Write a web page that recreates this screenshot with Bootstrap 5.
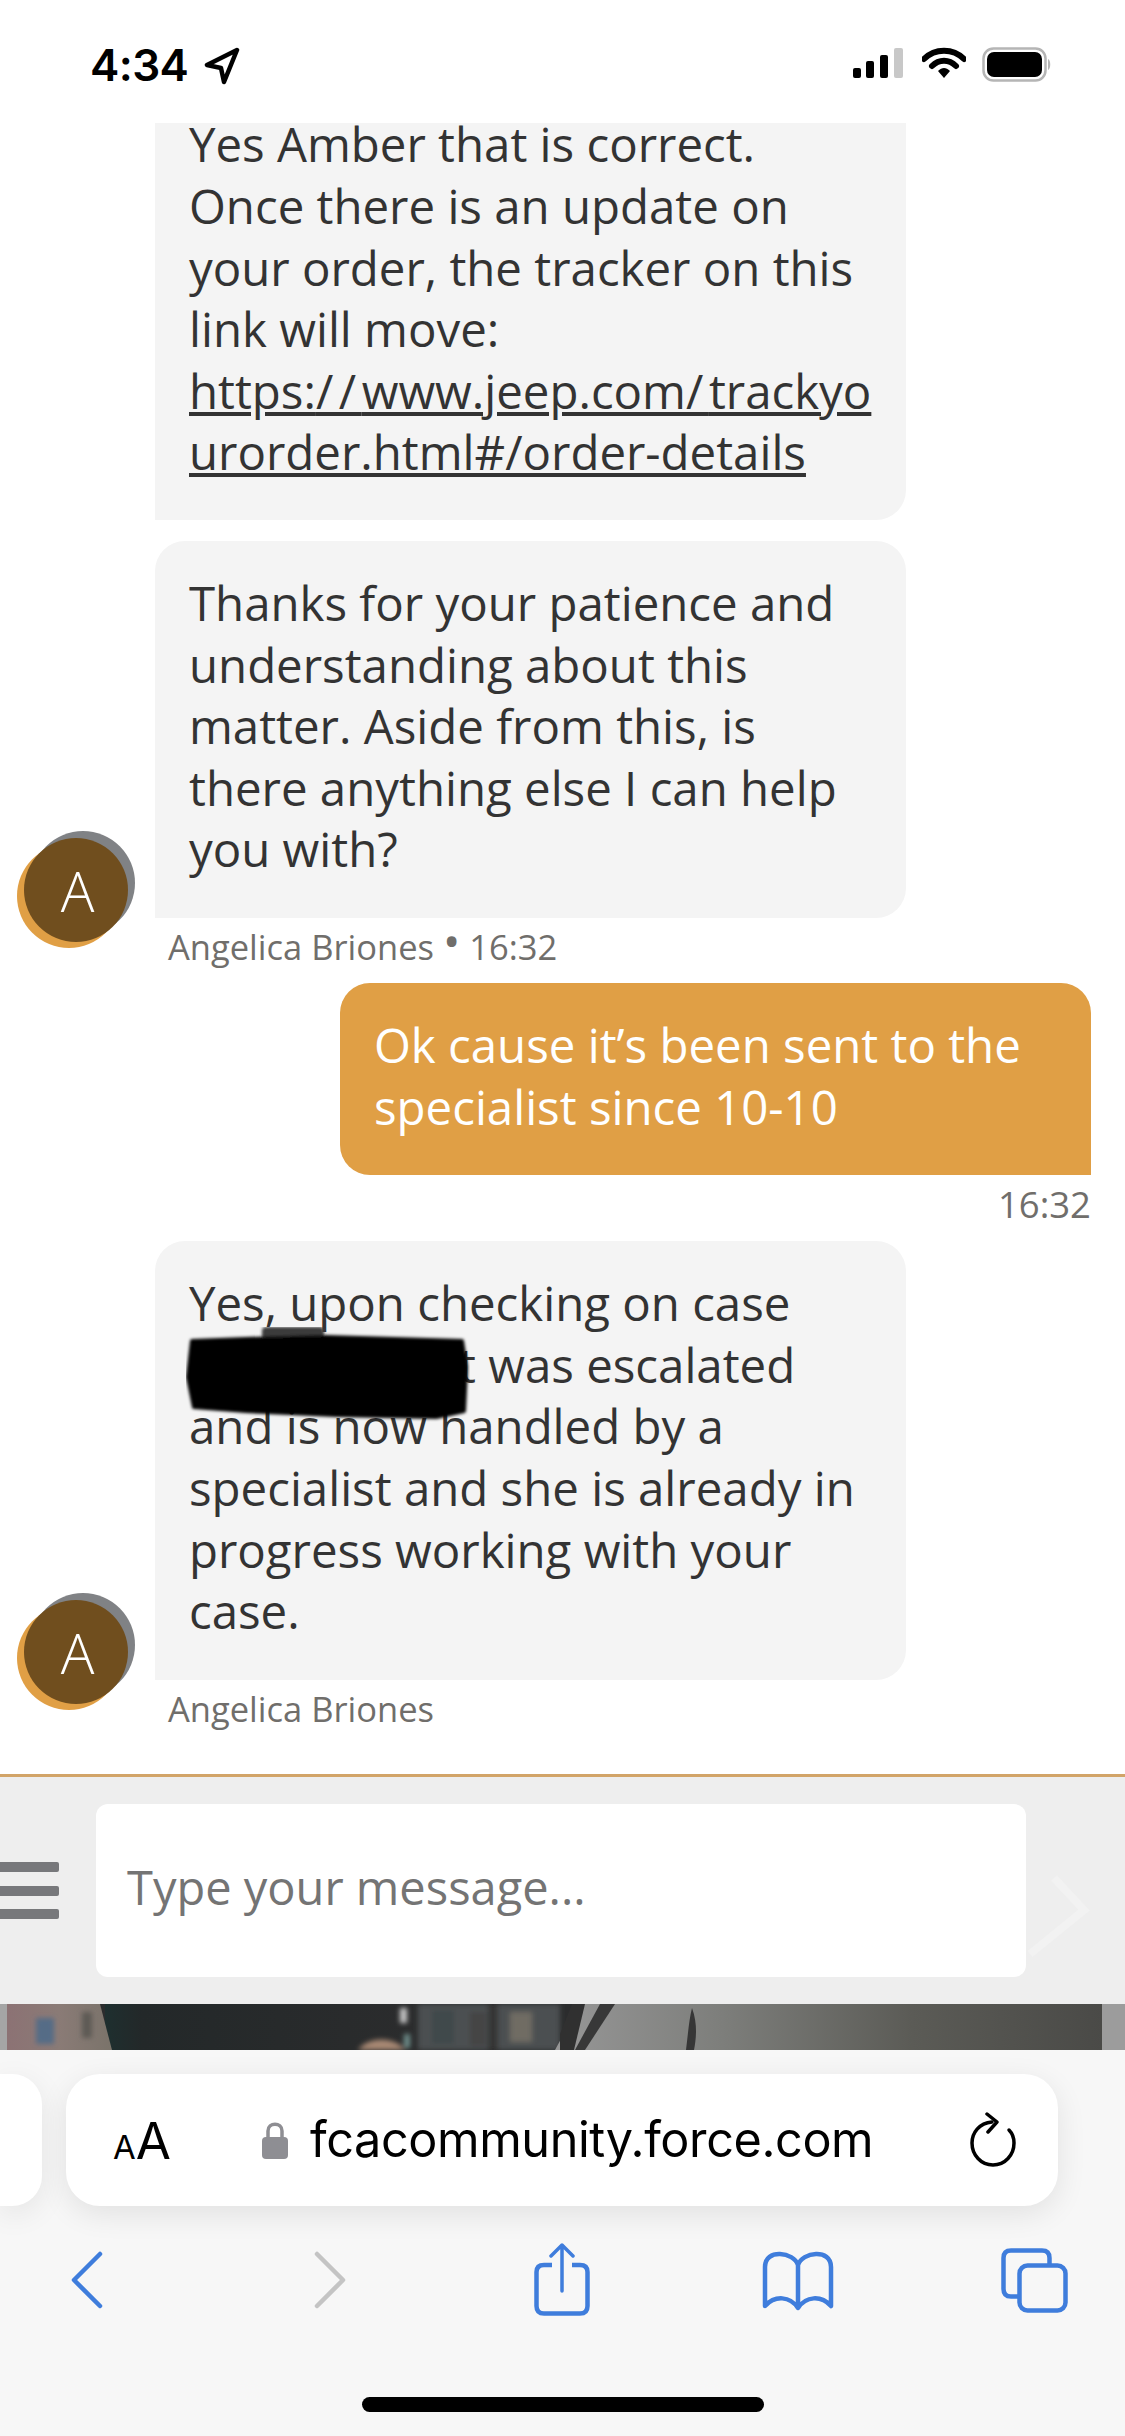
<!DOCTYPE html>
<html lang="en">
<head>
<meta charset="utf-8">
<title>Chat</title>
<link href="https://cdn.jsdelivr.net/npm/bootstrap@5.3.0/dist/css/bootstrap.min.css" rel="stylesheet">
<style>
html,body{margin:0;background:#fff}
.screen{width:1125px;height:2436px;font-family:"Open Sans",sans-serif}
.status-strip{height:123px;flex:none;padding:47px 73px 0 90px;background:#fff}
.clock{font-family:Inter,sans-serif;font-weight:600;font-size:44px;line-height:36px;letter-spacing:-.6px;color:#000}
.wifi-mark{margin-left:19px;margin-right:16px}
.chat-pane{flex:1 1 0;min-height:0;padding-right:34px}
.avatar-col{width:155px;flex:none;padding-left:24px}
.avatar-dot{width:104px;height:104px;border-radius:50%;background:#704e1e;color:#fff;font-size:56px;font-weight:300;padding-left:3px;margin-bottom:41px;box-shadow:-7px 6px 0 #e09f45,7px -7px 0 #808285}
.msg-block{width:751px}
.bubble-agent{background:#f4f4f4;color:#333;font-size:47.4px;line-height:61.6px;padding:31px 34px 38px;border-radius:30px 30px 30px 0;width:751px}
.bubble-agent a{color:#333}
.wide-slash{letter-spacing:5.5px}
.bubble-own{background:#e09f45;color:#fff;font-size:47.4px;line-height:61.6px;padding:31px 34px 38px;border-radius:30px 30px 0 30px;width:751px}
.first-bubble{border-radius:0 0 30px 0;padding-top:0;padding-bottom:37px;margin-bottom:21px}
.first-line{display:block;line-height:42px;margin-bottom:10px}
.meta-line{font-size:34.5px;line-height:40px;color:#706e6b;margin-top:9px;padding-left:13px;margin-bottom:16px}
.meta-right{font-size:36.5px;line-height:40px;color:#706e6b;margin-top:9px;margin-bottom:17px}
.dot-sep{font-size:46px;line-height:0;vertical-align:2px}
.redact-gap{display:inline-block;width:270px}
.redact-mark{position:absolute;left:31px;top:86px}
.compose-rule{height:3px;background:#d2a468;flex:none}
.compose-bar{height:227px;background:#eee;flex:none;padding:27px 99px 27px 0}
.bg-chevron{position:absolute;right:0;top:95px}
.menu-bars{width:59px;height:57px;margin-right:37px;flex:none}
.menu-bars i{display:block;height:10px;background:#77787b;border-radius:0 2px 2px 0}
.compose-box{height:173px;background:#fff;border-radius:12px;font-size:47px;color:#747474;padding:0 0 6px 31px;flex:1 1 0;position:relative}
.photo-strip{height:46px;flex:none;line-height:0}
.safari-panel{height:386px;background:#f7f7f7;flex:none;padding-top:24px}
.tab-stub{width:42px;height:132px;background:#fff;border-radius:0 30px 30px 0;margin-right:24px;box-shadow:0 8px 30px rgba(0,0,0,.08)}
.url-pill{width:992px;height:132px;background:#fff;border-radius:34px;box-shadow:0 8px 30px rgba(0,0,0,.09);padding:0 41px 0 47px}
.aa-label{font-family:Inter,sans-serif;color:#000;line-height:1;width:100px;flex:none}
.aa-small{font-size:33px}
.aa-big{font-size:51px}
.url-text{font-family:Inter,sans-serif;font-size:48.6px;color:#000;letter-spacing:-.4px;margin-left:21px;line-height:1}
.tool-row{height:80px;margin-top:34px}
.tool-row svg{flex:none;display:block}
.t-back{margin-left:70px}
.t-fwd{margin-left:209px}
.t-share{margin-left:185px}
.t-book{margin-left:169px}
.t-tabs{margin-left:164px}
.home-pill{width:402px;height:15px;background:#000;border-radius:8px;margin:77px auto 0}
</style>
</head>
<body>
<div class="screen d-flex flex-column overflow-hidden">
  <div class="status-strip d-flex justify-content-between align-items-start">
    <div class="d-flex align-items-start">
      <span class="clock">4:34</span>
      <svg width="36" height="38" viewBox="0 0 36 38" class="ms-3"><path d="M33 3 L3 18 L17 21 L20 35 Z" fill="none" stroke="#000" stroke-width="4.5" stroke-linejoin="round"/></svg>
    </div>
    <div class="d-flex align-items-start">
      <svg width="50" height="32" viewBox="0 0 50 32"><rect x="0" y="21" width="8" height="10" rx="2" fill="#000"/><rect x="13" y="14" width="8" height="17" rx="2" fill="#000"/><rect x="27" y="8" width="8" height="23" rx="2" fill="#000"/><rect x="41" y="1" width="9" height="30" rx="2" fill="#c8c8c8"/></svg>
      <svg width="44" height="32" viewBox="0 0 44 32" class="wifi-mark"><path d="M2 12 C13 1 31 1 42 12" fill="none" stroke="#000" stroke-width="6" stroke-linecap="round"/><path d="M10 19 C17 12 27 12 34 19" fill="none" stroke="#000" stroke-width="6" stroke-linecap="round"/><path d="M16 24 C20 20 24 20 28 24 L22 31 Z" fill="#000"/></svg>
      <svg width="70" height="35" viewBox="0 0 70 35"><rect x="1.5" y="1.5" width="62" height="32" rx="10" fill="none" stroke="#b5b5b5" stroke-width="2.5"/><rect x="5" y="5" width="55" height="25" rx="7" fill="#000"/><path d="M66 12 C69 13 69 22 66 23 Z" fill="#b5b5b5"/></svg>
    </div>
  </div>

  <main class="chat-pane">
    <div class="d-flex">
      <div class="avatar-col"></div>
      <div class="bubble-agent first-bubble"><span class="first-line">Yes Amber that is correct.</span>Once there is an update on your order, the tracker on this link will move:<br><a href="#" class="text-decoration-underline">https:<span class="wide-slash">//</span>www.jeep.com<span class="wide-slash">/</span>trackyo<br>urorder.html#/order-details</a></div>
    </div>
    <div class="d-flex">
      <div class="avatar-col d-flex align-items-end"><div class="avatar-dot d-flex align-items-center justify-content-center">A</div></div>
      <div class="msg-block">
        <div class="bubble-agent">Thanks for your patience and understanding about this matter. Aside from this, is there anything else I can help you with?</div>
        <div class="meta-line">Angelica Briones <span class="dot-sep">•</span> 16:32</div>
      </div>
    </div>
    <div class="d-flex justify-content-end">
      <div class="msg-block">
        <div class="bubble-own">Ok cause it’s been sent to the specialist since 10-10</div>
        <div class="meta-right text-end">16:32</div>
      </div>
    </div>
    <div class="d-flex">
      <div class="avatar-col d-flex align-items-end"><div class="avatar-dot d-flex align-items-center justify-content-center">A</div></div>
      <div class="msg-block">
        <div class="bubble-agent position-relative">Yes, upon checking on case<br><span class="redact-gap"></span>t was escalated and is now handled by a specialist and she is already in progress working with your case.
          <svg class="redact-mark" width="284" height="96" viewBox="0 0 284 96"><defs><filter id="smear" x="-5%" y="-10%" width="110%" height="120%"><feGaussianBlur stdDeviation="1.500"/></filter></defs><g filter="url(#smear)"><rect x="76" y="0" width="62" height="14" rx="4" fill="#3a3a3a"/><path d="M6 14 L60 12 L140 10 L276 14 L280 40 L278 84 L250 90 L150 88 L60 84 L8 80 L2 50 Z" fill="#000" stroke="#000" stroke-width="4" stroke-linejoin="round"/></g></svg>
        </div>
        <div class="meta-line">Angelica Briones</div>
      </div>
    </div>
  </main>

  <div class="compose-rule"></div>
  <div class="compose-bar d-flex align-items-center position-relative">
    <svg class="bg-chevron" width="99" height="90" viewBox="0 0 99 90"><path d="M4 82 L58 38 L28 6" fill="none" stroke="#f2f2f2" stroke-width="8"/></svg>
    <div class="menu-bars d-flex flex-column justify-content-between"><i></i><i></i><i></i></div>
    <div class="compose-box d-flex align-items-center">Type your message...</div>
  </div>

  <div class="photo-strip">
    <svg width="1125" height="46" viewBox="0 0 1125 46">
      <defs>
        <linearGradient id="gr" gradientUnits="userSpaceOnUse" x1="560" x2="1102" y1="0" y2="0"><stop offset="0" stop-color="#969696"/><stop offset=".3" stop-color="#7d7e7b"/><stop offset=".65" stop-color="#5b5b56"/><stop offset="1" stop-color="#4a4a47"/></linearGradient>
        <linearGradient id="mur" x1="0" x2="1" y1="0" y2="0"><stop offset="0" stop-color="#8c7274"/><stop offset=".5" stop-color="#8a7b76"/><stop offset="1" stop-color="#7a736a"/></linearGradient>
        <linearGradient id="dk" x1="0" x2="1" y1="0" y2="0"><stop offset="0" stop-color="#1e2f2f"/><stop offset=".12" stop-color="#232829"/><stop offset="1" stop-color="#2b2c2d"/></linearGradient>
        <filter id="soft"><feGaussianBlur stdDeviation="2.500"/></filter>
      </defs>
      <rect width="1125" height="46" fill="#2b2c2d"/>
      <rect x="105" width="310" height="46" fill="url(#dk)"/>
      <path d="M7 0 H100 L112 46 H7 Z" fill="url(#mur)"/>
      <g filter="url(#soft)">
        <rect x="36" y="14" width="18" height="26" fill="#556c86"/>
        <rect x="82" y="8" width="10" height="26" fill="#5d5a55"/>
        <path d="M358 46 C368 32 395 32 405 46 Z" fill="#a88873"/>
        <rect x="400" y="4" width="7" height="15" fill="#c8c8c8"/>
        <rect x="404" y="30" width="6" height="14" fill="#6f8f8c"/>
        <rect x="418" width="142" height="46" fill="#4b5051"/>
        <rect x="432" y="6" width="22" height="34" fill="#3f484c"/>
        <rect x="470" y="8" width="16" height="34" fill="#444"/>
        <rect x="510" y="8" width="22" height="30" fill="#6f6c64"/>
        <rect x="488" width="10" height="46" fill="#353636"/>
      </g>
      <path d="M555 46 L580 0 H1102 V46 Z" fill="url(#gr)"/>
      <path d="M560 46 V30 L572 0 H585 L574 46 Z" fill="#303030"/>
      <path d="M575 46 L600 0 H615 L585 46 Z" fill="#383838"/>
      <path d="M692 4 C698 20 696 36 694 46 H686 C688 30 689 16 692 4 Z" fill="#363636"/>
      <rect x="1102" width="23" height="46" fill="#9c9c9c"/>
      <rect width="7" height="46" fill="#a5a5a5"/>
    </svg>
  </div>

  <div class="safari-panel">
    <div class="d-flex">
      <div class="tab-stub"></div>
      <div class="url-pill d-flex align-items-center">
        <div class="aa-label"><span class="aa-small">A</span><span class="aa-big">A</span></div>
        <svg width="28" height="38" viewBox="0 0 28 38" class="ms-5"><path d="M7 18 V10 C7 1 21 1 21 10 V18" fill="none" stroke="#8e8e93" stroke-width="3.5"/><rect x="1" y="16" width="26" height="22" rx="4" fill="#8e8e93"/></svg>
        <span class="url-text">fcacommunity.force.com</span>
        <svg width="48" height="56" viewBox="0 0 48 56" class="ms-auto"><path d="M23 10 C10 11 3 21 3 31 C3 43 12 53 24 53 C36 53 45 43 45 31 C45 25 43 21 40 18" fill="none" stroke="#000" stroke-width="3.500" stroke-linecap="round"/><path d="M18 2 L28 10 L19 20" fill="none" stroke="#000" stroke-width="3.500" stroke-linecap="round" stroke-linejoin="round"/></svg>
      </div>
    </div>
    <div class="tool-row d-flex align-items-center">
      <svg class="t-back" width="34" height="60" viewBox="0 0 34 60"><path d="M30 4 L4 30 L30 56" fill="none" stroke="#3f7ddc" stroke-width="4.5" stroke-linecap="round" stroke-linejoin="round"/></svg>
      <svg class="t-fwd" width="34" height="60" viewBox="0 0 34 60"><path d="M4 4 L30 30 L4 56" fill="none" stroke="#c4c4c4" stroke-width="4.5" stroke-linecap="round" stroke-linejoin="round"/></svg>
      <svg class="t-share" width="60" height="76" viewBox="0 0 60 76"><path d="M20 23 H12 C7 23 4.500 25.500 4.500 30 V64 C4.500 69 7 71.500 12 71.500 H48 C53 71.500 55.500 69 55.500 64 V30 C55.500 25.500 53 23 48 23 H40" fill="none" stroke="#3f7ddc" stroke-width="4.5"/><path d="M30 49 V3 M19 14 L30 3 L41 14" fill="none" stroke="#3f7ddc" stroke-width="3.500" stroke-linecap="round" stroke-linejoin="round"/></svg>
      <svg class="t-book" width="74" height="64" viewBox="0 0 74 64"><path d="M37 17 C33 4 4 0 4 19 V58 C14 47 29 48 37 60 C45 48 60 47 70 58 V19 C70 0 41 4 37 17 Z M37 17 V60" fill="none" stroke="#3f7ddc" stroke-width="4.500" stroke-linejoin="round"/></svg>
      <svg class="t-tabs" width="72" height="70" viewBox="0 0 72 70"><path d="M19 51.500 H12 C7 51.500 4.500 49 4.500 44 V13 C4.500 8 7 5.500 12 5.500 H43 C48 5.500 50.500 8 50.500 13 V19" fill="none" stroke="#3f7ddc" stroke-width="4.500"/><rect x="20.500" y="20.500" width="46" height="45" rx="8" fill="none" stroke="#3f7ddc" stroke-width="4.500"/></svg>
    </div>
    <div class="home-pill"></div>
  </div>
</div>
<script src="https://cdn.jsdelivr.net/npm/bootstrap@5.3.0/dist/js/bootstrap.bundle.min.js"></script>
</body>
</html>
